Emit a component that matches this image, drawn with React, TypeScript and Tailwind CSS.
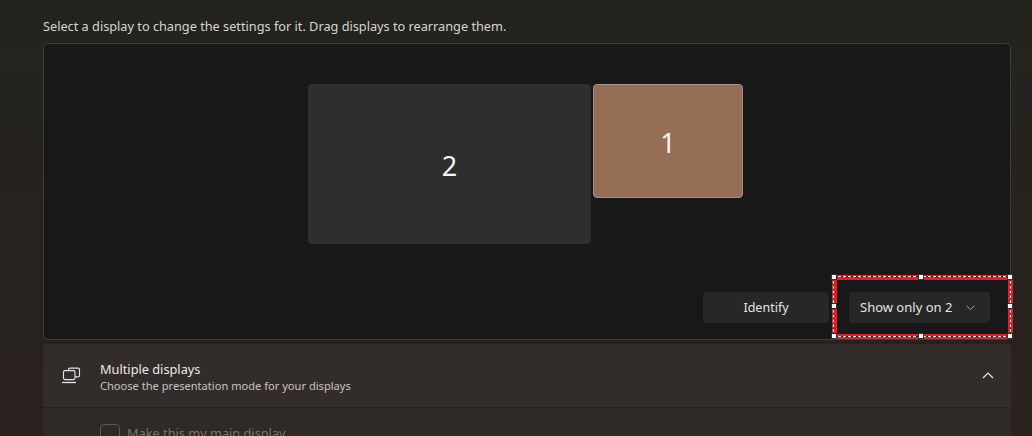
import React from 'react'

function MultiDisplayIcon() {
  return (
    <svg width="20" height="18" viewBox="0 0 20 18" fill="none" stroke="#e6e4e2" strokeWidth="1.1">
      <path d="M6.5 3.5V2.6c0-.9.6-1.5 1.5-1.5h8c.9 0 1.5.6 1.5 1.5v5.8c0 .9-.6 1.5-1.5 1.5h-3" />
      <rect x="1.5" y="3.6" width="11.5" height="9" rx="1.5" />
      <path d="M0 15.5h14" strokeWidth="1.3" />
    </svg>
  )
}

function Chevron({ up, size, color }: { up?: boolean; size: number; color: string }) {
  return (
    <svg width={size} height={size / 2 + 1} viewBox="0 0 12 7" fill="none" stroke={color} strokeWidth="1.2">
      <path d={up ? 'M1 6l5-5 5 5' : 'M1 1l5 5 5-5'} />
    </svg>
  )
}

function Handle({ className }: { className: string }) {
  return <div className={`absolute h-[6px] w-[6px] border border-[#333] bg-white ${className}`} />
}

// screenshot annotation sitting over the dropdown
function SelectionBox() {
  return (
    <>
      <div className="absolute left-[832px] top-[275px] h-[64px] w-[181px] border-[5px] border-[#ec1c24]" />
      <div className="absolute left-[833px] top-[276px] h-[61px] w-[178px] border border-black">
        <div className="absolute inset-[-1px] border border-dashed border-white" />
        <Handle className="left-[-3px] top-[-3px]" />
        <Handle className="left-[84px] top-[-3px]" />
        <Handle className="right-[-3px] top-[-3px]" />
        <Handle className="left-[-3px] top-[26px]" />
        <Handle className="right-[-3px] top-[26px]" />
        <Handle className="bottom-[-3px] left-[-3px]" />
        <Handle className="bottom-[-3px] left-[84px]" />
        <Handle className="bottom-[-3px] right-[-3px]" />
      </div>
    </>
  )
}

export default function App() {
  return (
    <div className="relative h-[436px] w-[1032px] overflow-hidden bg-gradient-to-b from-[#23231e] via-[#26221e] to-[#2a221e] font-['Noto_Sans',sans-serif]">
      <div className="pl-[43px] pr-[21px]">
        <p className="flex h-[43px] items-center pt-[11px] text-[12.72px] text-[#d6d5d2]">
          Select a display to change the settings for it. Drag displays to rearrange them.
        </p>

        <div className="flex h-[297px] flex-col rounded-[5px] border border-[#3c3c38] bg-[#181818]">
          <div className="flex items-start gap-[2px] pl-[264px] pt-[40px]">
            <div className="flex h-[160px] w-[283px] items-center justify-center rounded-[4px] bg-[#2e2e2e] pt-[2px] text-[27px] leading-none text-[#f4f4f4]">
              2
            </div>
            <div className="flex h-[114px] w-[150px] items-center justify-center rounded-[4px] border border-[#a0948c] bg-[#966d55] pt-[2px] text-[27px] leading-none text-[#f4f4f4]">
              1
            </div>
          </div>

          <div className="mt-[48px] flex items-center gap-[20px] pl-[659px]">
            <button className="h-[31px] w-[126px] rounded-[4px] bg-[#272727] pt-[1px] text-[12.5px] text-[#e4e4e4]">
              Identify
            </button>
            <button className="flex h-[31px] w-[141px] items-center justify-between rounded-[4px] bg-[#272727] pl-[11px] pr-[15px] pt-[1px] text-[13px] text-[#e4e4e4]">
              Show only on 2
              <Chevron size={9} color="#b5b5b5" />
            </button>
          </div>
        </div>

        <div className="mt-[4px] rounded-t-[4px] bg-[#322d2a]">
          <div className="flex h-[64px] items-center border-b border-[#26211e] pl-[19px] pr-[17px]">
            <MultiDisplayIcon />
            <div className="ml-[18px] flex-1 pt-[3px]">
              <p className="text-[12.75px] leading-[17px] text-[#ebe9e7]">Multiple displays</p>
              <p className="text-[11.1px] leading-[16px] text-[#c6c3c0]">Choose the presentation mode for your displays</p>
            </div>
            <Chevron up size={12} color="#e8e8e8" />
          </div>
          <div className="flex h-[28px] items-start bg-[#2f2a27] pl-[57px] pt-[16px]">
            <span className="h-[20px] w-[20px] shrink-0 rounded-[4px] border border-[#5c5855]" />
            <span className="ml-[7px] text-[12.75px] leading-[19px] text-[#77736f]">Make this my main display</span>
          </div>
        </div>
      </div>

      <SelectionBox />
    </div>
  )
}
